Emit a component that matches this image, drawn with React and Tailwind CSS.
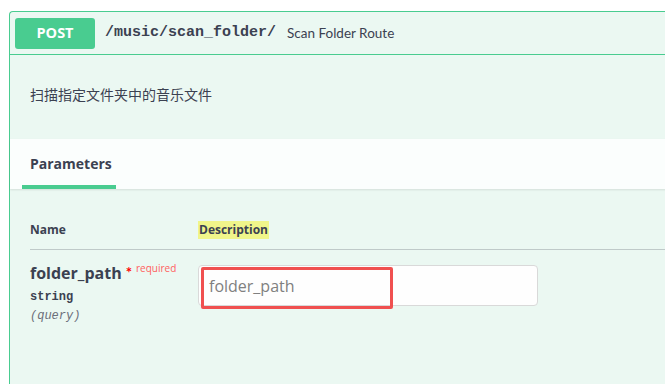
export default function App() {
  return (
    <div className="min-h-screen w-[665px] h-[384px] overflow-hidden bg-white text-[#3b4151] font-['Lato','Noto_Sans_CJK_SC',sans-serif]">
      <div className="ml-[9px] mt-[11px] w-[700px] h-[400px] border-l border-t border-[#49cc90] rounded-tl-[4px] bg-[#ebf8f2]">
        {/* summary */}
        <div className="h-[43px] flex items-center pl-[5px] border-b border-[#49cc90]">
          <div className="w-[80px] h-[31px] rounded-[3px] bg-[#49cc90] flex items-center justify-center text-white font-bold text-[14.5px] font-['Open_Sans',sans-serif]">
            POST
          </div>
          <span className="ml-[10px] font-['Liberation_Mono',monospace] font-bold text-[15px] text-[#3b4151]">
            /music/scan_folder/
          </span>
          <span className="ml-[11px] text-[13.5px] text-[#3b4151]">Scan Folder Route</span>
        </div>

        {/* description */}
        <div className="h-[84px] flex items-center pl-[20px] pb-[6px]">
          <p className="text-[14px] font-['Noto_Sans_CJK_SC',sans-serif]">扫描指定文件夹中的音乐文件</p>
        </div>

        {/* parameters tab header */}
        <div className="h-[50px] bg-[#fbfefd] shadow-[0_1px_2px_rgba(0,0,0,0.1)] flex items-end pl-[12px]">
          <div className="w-[94px] h-full flex flex-col">
            <div className="flex-1 flex items-center pl-[8px] pt-[3px] font-bold text-[14px] font-['Open_Sans',sans-serif]">
              Parameters
            </div>
            <div className="h-[4px] bg-[#49cc90]" />
          </div>
        </div>

        {/* table */}
        <div className="pl-[20px]">
          <div className="h-[61px] flex items-end pb-[10px] border-b border-[#3b4151]/25 text-[12px] font-bold font-['Open_Sans',sans-serif]">
            <div className="w-[168px]">Name</div>
            <div className="bg-[#f0f58a] px-[1px]">Description</div>
          </div>
          <div className="flex pt-[12px]">
            <div className="w-[168px] flex flex-col">
              <div className="flex items-start">
                <span className="text-[16px] font-bold font-['Open_Sans',sans-serif] leading-[22px]">folder_path</span>
                <span className="ml-[4px] text-[#ff0000] text-[15px] font-bold leading-[14px] mt-[3px]">*</span>
                <span className="ml-[4px] text-[10px] text-[#ff6060] leading-[12px] mt-[0px] font-['Open_Sans',sans-serif]">required</span>
              </div>
              <div className="mt-[5px] text-[12px] font-bold font-['Liberation_Mono',monospace] leading-[16px]">string</div>
              <div className="mt-[3px] text-[12px] italic font-['Liberation_Mono',monospace] text-[#6b6f7a] leading-[16px]">(query)</div>
            </div>
            <div className="relative mt-[3px]">
              <div className="w-[340px] h-[41px] rounded-[4px] border border-[#d9d9d9] bg-[#fefefe] flex items-center pl-[10px] text-[16px] text-[#808080] font-['Open_Sans',sans-serif]">
                folder_path
              </div>
              <div className="absolute left-[3px] top-[2px] w-[192px] h-[42px] border-[3px] border-[#f05050] rounded-[2px]" />
            </div>
          </div>
        </div>
      </div>
    </div>
  );
}
